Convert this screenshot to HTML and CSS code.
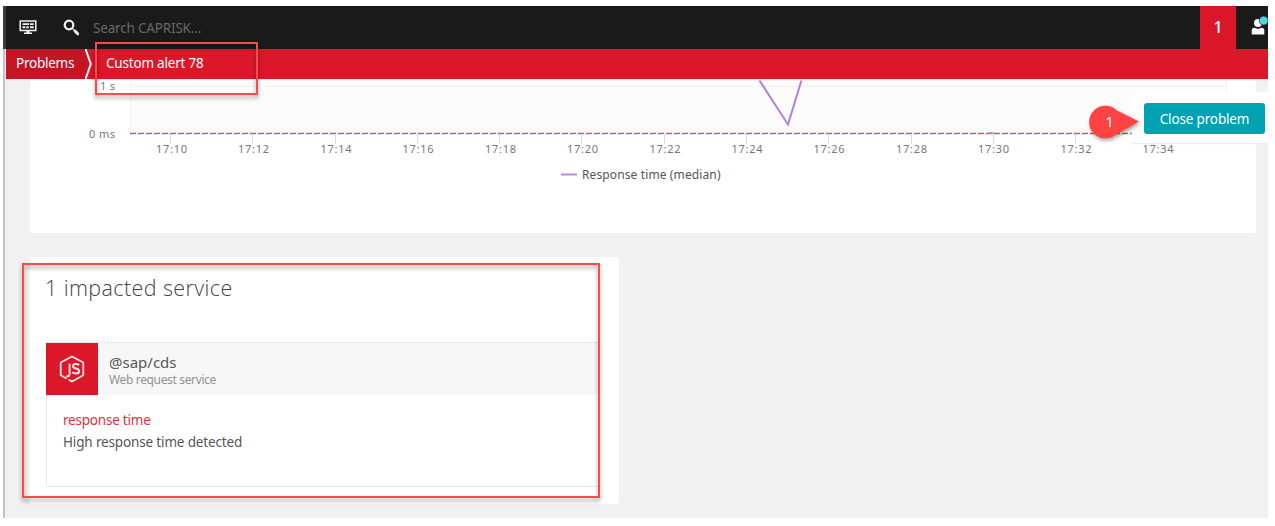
FILE: index.html
```html
<!DOCTYPE html>
<html lang="en">
<head>
<meta charset="utf-8">
<title>Custom alert 78</title>
<link rel="stylesheet" href="styles.css">
</head>
<body>
<div class="window">
  <header class="topbar">
    <svg class="icon-dashboard" width="18" height="17" viewBox="0 0 18 17">
      <path d="M1.200 2h15.600v9.500H1.200z" fill="none" stroke="#f2f2f2" stroke-width="1.500"/>
      <path d="M3.500 4.200h6.600v1.900H3.500zM11 4.200h3.700v1.900H11zM3.500 7.300h2.800v2H3.500zM7.200 7.300h2.600v2H7.200zM11 7.300h3.700v2H11zM7.500 12h3v1.500H13V15H5v-1.500h2.500z" fill="#f2f2f2"/>
    </svg>
    <svg class="icon-search" width="17" height="17" viewBox="0 0 17 17">
      <circle cx="6" cy="6" r="4.300" fill="none" stroke="#f4f4f4" stroke-width="2.200"/>
      <path d="M9.300 9.300l1.800 1.800" stroke="#f4f4f4" stroke-width="1.200"/>
      <path d="M12 12l2.700 2.700" stroke="#f4f4f4" stroke-width="3" stroke-linecap="round"/>
    </svg>
    <span class="search-text">Search CAPRISK...</span>
    <span class="problem-count">1</span>
    <svg class="icon-user" width="17" height="20" viewBox="0 0 17 20">
      <circle cx="7" cy="7" r="4" fill="#f8f8f8"/>
      <path d="M.7 18.400v-4q0-2.700 2.800-2.700l3.500 1.400 3.500-1.400q2.800 0 2.800 2.700v4z" fill="#f8f8f8"/>
      <circle cx="12.700" cy="4.600" r="4.500" fill="#4fd5e0" stroke="#1a1a1a" stroke-width=".7"/>
    </svg>
  </header>
  <nav class="crumbs">
    <span class="crumb-root"><span class="crumb-root-label">Problems</span></span>
    <svg class="crumb-arrow" width="14" height="30" viewBox="0 0 14 30">
      <path d="M0 0h0.500l5.300 15L0.500 30H0z" fill="#c41425"/>
      <path d="M0.500 0l5.300 15L0.500 30" fill="none" stroke="#fff" stroke-width="1.900"/>
    </svg>
    <span class="crumb-current">Custom alert 78</span>
  </nav>
  <main class="content">
    <section class="card chart-card">
      <svg class="chart" width="1226" height="153" viewBox="30 80 1226 153">
        <path d="M130 80h1097v53H130z" fill="#fcfcfc"/>
        <path d="M130 86.5h1097M130.5 80v53M1226.5 80v53" stroke="#f0f0f0" fill="none"/>
        <path class="ticks" d="M170.5 134v10M252.5 134v10M335.5 134v10M417.5 134v10M499.5 134v10M581.5 134v10M664.5 134v10M746.5 134v10M828.5 134v10M911.5 134v10M993.5 134v10M1075.5 134v10M1158.5 134v10"/>
        <path d="M130 134.4h1097" stroke="#dbe0ee"/>
        <path d="M130 133.4h1097" stroke="#d94f63" stroke-width="1.2" stroke-dasharray="6 2"/>
        <path d="M989 133h5" stroke="#ae83cf" stroke-width="1.5"/>
        <path d="M759.5 80.5L788 124.500l13.400-44" fill="none" stroke="#b07fd6" stroke-width="2"/>
        <g class="axis">
          <text x="100" y="90" textLength="15">1 s</text>
          <text x="89" y="137.500" textLength="26">0 ms</text>
          <text x="156" y="153" textLength="31">17:10</text>
          <text x="238" y="153" textLength="31">17:12</text>
          <text x="320.500" y="153" textLength="31">17:14</text>
          <text x="402.500" y="153" textLength="31">17:16</text>
          <text x="485" y="153" textLength="31">17:18</text>
          <text x="567" y="153" textLength="31">17:20</text>
          <text x="649.500" y="153" textLength="31">17:22</text>
          <text x="731.500" y="153" textLength="31">17:24</text>
          <text x="813.500" y="153" textLength="31">17:26</text>
          <text x="896" y="153" textLength="31">17:28</text>
          <text x="978" y="153" textLength="31">17:30</text>
          <text x="1060.500" y="153" textLength="31">17:32</text>
          <text x="1142.500" y="153" textLength="31">17:34</text>
        </g>
        <path d="M561 174.500h16" stroke="#b58bd9" stroke-width="2"/>
        <text class="legend" x="582" y="179" textLength="138.500">Response time (median)</text>
      </svg>
    </section>
    <section class="card impact-card">
      <h2 class="impact-title">1 impacted service</h2>
      <article class="service">
        <div class="service-head">
          <div class="service-logo">
            <svg width="26" height="28" viewBox="0 0 26 28">
              <path d="M7.600 23.500L1.700 20.300V7.600L13 1.400l11.300 6.200v12.700L13 26.500l-3.600-2" fill="none" stroke="#ffe9eb" stroke-width="1.700" stroke-linejoin="round"/>
              <path d="M10.600 8.700v10.200q0 2.700-3.200 2.300M20.100 10q-1.300-1-3.400-1-2.700 0-2.700 2.100 0 1.900 2.900 2.300 3.200.4 3.200 2.500 0 2.500-3.200 2.500-2.400 0-3.700-1.300" fill="none" stroke="#ffe9eb" stroke-width="2"/>
            </svg>
          </div>
          <div class="service-names">
            <div class="service-name">@sap/cds</div>
            <div class="service-type">Web request service</div>
          </div>
        </div>
        <div class="service-body">
          <div class="event-name">response time</div>
          <div class="event-text">High response time detected</div>
        </div>
      </article>
    </section>
  </main>
</div>
<div class="close-panel"><button class="close-button"><span>Close problem</span></button></div>
<svg class="pin" width="56" height="42" viewBox="0 0 56 42">
  <path d="M31 8.500L53 19.500 30 32.500A16.300 16.300 0 1 1 31 8.500z" fill="#ff4343"/>
  <text x="23.500" y="25" text-anchor="middle">1</text>
</svg>
<div class="mark mark-crumb"></div>
<div class="mark mark-impact"></div>
</body>
</html>
```
FILE: styles.css
```css
* { box-sizing: border-box; }
body {
  margin: 0;
  padding: 6px 7px 8px 3px;
  height: 526px;
  overflow: hidden;
  background: #fff;
  font-family: "Noto Sans", "Open Sans", sans-serif;
  color: #565656;
}
.window {
  width: 1265px;
  height: 512px;
  background: #f1f1f1;
  border-left: 2px solid #c4c4c4;
  display: flex;
  flex-direction: column;
}
.topbar {
  height: 43px;
  flex: none;
  margin-left: -2px;
  border-left: 3px solid #3d3d3d;
  background: #1a1a1a;
  display: flex;
  align-items: center;
}
.icon-dashboard { margin-left: 13px; margin-top: -1px; flex: none; }
.icon-search { margin-left: 26px; margin-top: -1px; flex: none; }
.search-text {
  margin-left: 13px;
  flex: 1;
  font-size: 13.500px;
  letter-spacing: -0.180px;
  color: #686868;
}
.problem-count {
  width: 36px;
  height: 43px;
  background: #dc172a;
  color: #fff;
  font-size: 16px;
  font-weight: 500;
  line-height: 42px;
  text-align: center;
}
.icon-user { width: 17px; margin-left: 15px; margin-top: -4px; flex: none; }
.crumbs {
  height: 30px;
  flex: none;
  margin-left: 1px;
  background: #dc172a;
  display: flex;
  line-height: 28px;
  font-size: 13.500px;
  color: #fff;
}
.crumb-root { width: 79px; padding-left: 10px; background: #c41425; white-space: nowrap; }
.crumb-root-label { letter-spacing: -0.250px; }
.crumb-arrow { flex: none; }
.crumb-current { padding-left: 7px; letter-spacing: -0.200px; }
.content { padding: 1px 12px 0 25px; }
.card { background: #fff; border-radius: 3px; }
.chart-card { height: 153px; width: 1226px; }
.chart { display: block; overflow: visible; }
.ticks { stroke: #d5dbec; fill: none; }
.axis { font-size: 11px; fill: #777; }
.legend { font-size: 12px; fill: #555; }
.impact-card { width: 589px; height: 247px; margin-top: 24px; padding: 17px 20px 0 16px; }
.impact-title {
  margin: 0 0 40px -1px;
  font-family: "Open Sans", "Noto Sans", sans-serif;
  font-size: 21.500px;
  font-weight: 300;
  letter-spacing: 0.400px;
  line-height: 28px;
  color: #444;
}
.service { height: 145px; border: 1px solid #e8e8e8; border-radius: 2px; }
.service-head { height: 52px; display: flex; background: #f7f7f7; }
.service-logo {
  width: 52px;
  margin-left: -1px;
  background: #dc172a;
  display: flex;
  align-items: center;
  justify-content: center;
}
.service-names { padding: 9px 0 0 11px; }
.service-name { font-size: 15px; line-height: 20px; }
.service-type { font-size: 12px; line-height: 15px; color: #929292; letter-spacing: -0.350px; }
.service-body { padding: 14px 16px; font-size: 13.500px; line-height: 22px; letter-spacing: -0.150px; }
.event-name { color: #df3040; letter-spacing: -0.220px; }
.close-panel {
  position: absolute;
  left: 1132px;
  top: 92px;
  width: 136px;
  height: 51px;
  padding: 11px 3px 9px 12px;
  background: #fff;
  box-shadow: 0 1px 1px #eee;
}
.close-button {
  width: 121px;
  height: 31px;
  padding: 0;
  border: 0;
  border-radius: 3px;
  background: #00a1b2;
  color: #fff;
  font: 13.500px "Noto Sans", sans-serif;
  letter-spacing: -0.150px;
}
.pin {
  position: absolute;
  left: 1086px;
  top: 102px;
  filter: drop-shadow(1px 2px 2px rgba(0, 0, 0, 0.4));
  fill: #fff;
  font-size: 15px;
}
.mark {
  position: absolute;
  border: 2px solid #fb4a4a;
  filter: drop-shadow(0 3px 2px rgba(0, 0, 0, 0.4));
}
.mark-crumb { left: 95px; top: 42px; width: 163px; height: 53px; }
.mark-impact { left: 22px; top: 263px; width: 578px; height: 235px; }
```
